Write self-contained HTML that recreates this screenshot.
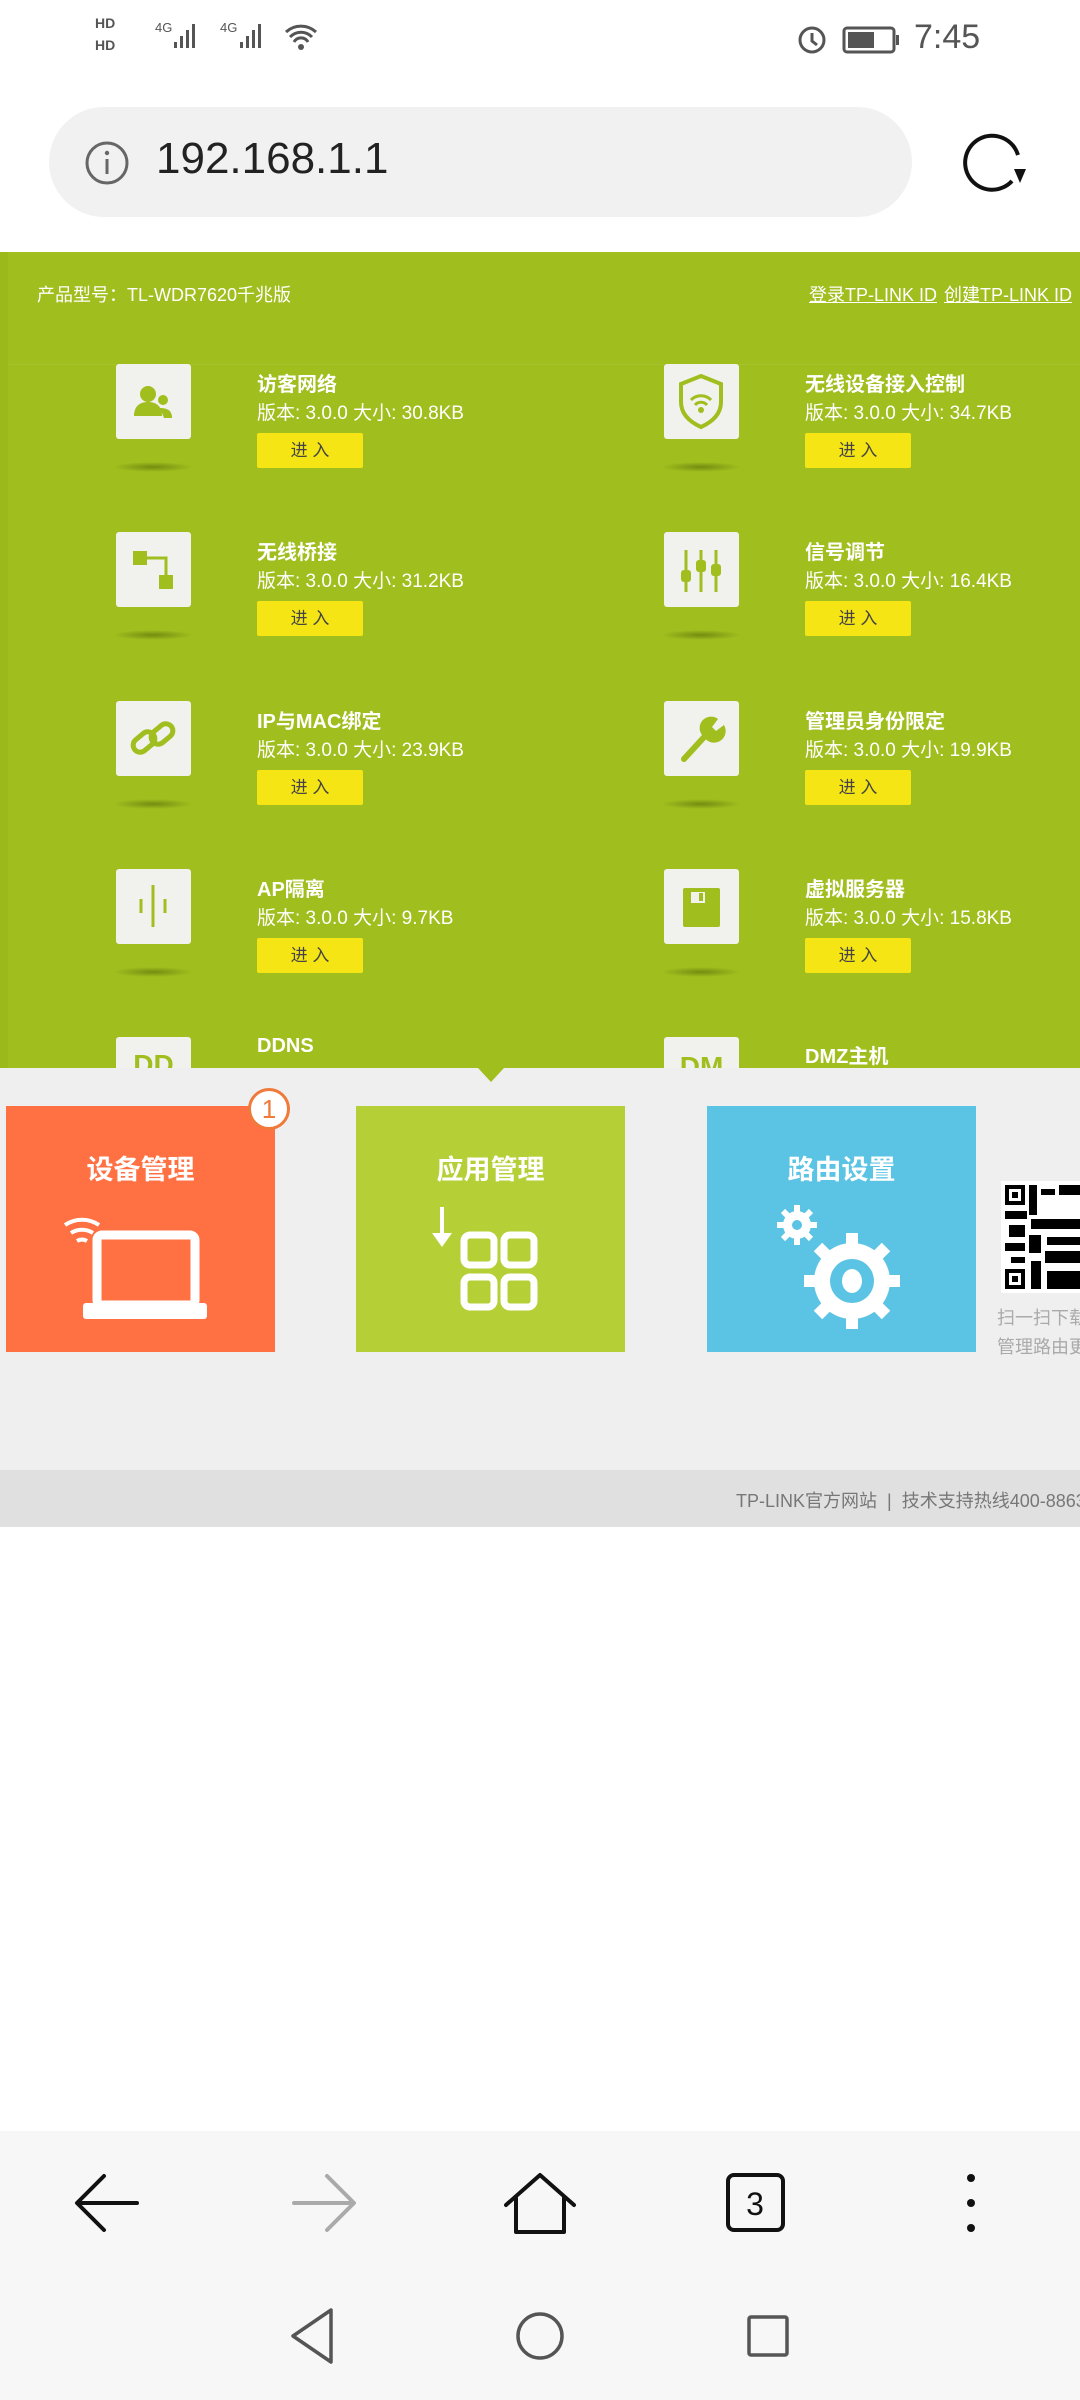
<!DOCTYPE html>
<html><head><meta charset="utf-8"><style>
*{margin:0;padding:0;box-sizing:border-box}
body{width:1080px;height:2400px;position:relative;background:#fff;font-family:"Liberation Sans","Noto Sans CJK SC",sans-serif;overflow:hidden}
.a{position:absolute}
.ico{position:absolute;width:75px;height:75px;background:#f1f1ed;border-radius:3px}
.sh{position:absolute;width:80px;height:10px;border-radius:50%;background:radial-gradient(ellipse,rgba(60,80,0,.45),rgba(60,80,0,0) 70%)}
.t{position:absolute;color:#fff;font-weight:bold;font-size:20px}
.v{position:absolute;color:#fff;font-size:19px;white-space:nowrap}
.b{position:absolute;width:106px;height:35px;background:#f6e514;color:#444;font-size:17px;text-align:center;line-height:35px;border-radius:2px}
.card{position:absolute;top:1106px;height:246px;width:269px;color:#fff;font-weight:bold;font-size:27px;text-align:center;padding-top:42px}
</style></head><body>
<div class="a" style="left:95px;top:12px;font-size:14px;font-weight:bold;color:#555;line-height:22px">HD<br>HD</div>
<div class="a" style="left:155px;top:20px;font-size:13px;color:#555">4G</div>
<div class="a" style="left:220px;top:20px;font-size:13px;color:#555">4G</div>
<svg class="a" style="left:168px;top:18px" width="160" height="40"><g fill="#555"><rect x="6" y="24" width="3" height="6"/><rect x="12" y="18" width="3" height="12"/><rect x="18" y="12" width="3" height="18"/><rect x="24" y="6" width="3" height="24"/><rect x="72" y="24" width="3" height="6"/><rect x="78" y="18" width="3" height="12"/><rect x="84" y="12" width="3" height="18"/><rect x="90" y="6" width="3" height="24"/></g><g fill="none" stroke="#555" stroke-width="3"><path d="M118 14a22 22 0 0 1 30 0M122 19a15 15 0 0 1 22 0M126 24a8 8 0 0 1 14 0"/></g><circle cx="133" cy="29" r="3" fill="#555"/></svg>
<svg class="a" style="left:792px;top:20px" width="120" height="40"><circle cx="20" cy="20" r="12" fill="none" stroke="#555" stroke-width="3"/><path d="M20 13v8l5 4" stroke="#555" stroke-width="3" fill="none"/><rect x="52" y="8" width="50" height="24" rx="3" fill="none" stroke="#555" stroke-width="3"/><rect x="56" y="12" width="26" height="16" fill="#555"/><rect x="104" y="15" width="3" height="10" fill="#555"/></svg>
<div class="a" style="left:914px;top:18px;font-size:34px;color:#555">7:45</div>
<div class="a" style="left:49px;top:107px;width:863px;height:110px;border-radius:55px;background:#f1f1f1"></div>
<svg class="a" style="left:84px;top:140px" width="46" height="46"><circle cx="23" cy="23" r="20" fill="none" stroke="#666" stroke-width="3"/><rect x="21.5" y="19" width="3" height="15" fill="#666"/><circle cx="23" cy="13" r="2.2" fill="#666"/></svg>
<div class="a" style="left:156px;top:134px;font-size:44px;color:#222">192.168.1.1</div>
<svg class="a" style="left:960px;top:125px" width="72" height="72"><path d="M58 30A27 27 0 1 0 52 56" fill="none" stroke="#111" stroke-width="4"/><path d="M54 44l6 14 6-14z" fill="#111"/></svg>
<div class="a" style="left:0;top:252px;width:1080px;height:816px;background:#a0be1e;overflow:hidden">
<div class="a" style="left:0;top:0;width:8px;height:816px;background:#9cb91b"></div>
<div class="a" style="left:37px;top:29px;color:#fff;font-size:18px">产品型号：TL-WDR7620千兆版</div>
<div class="a" style="left:809px;top:29px;color:#fff;font-size:18px;text-decoration:underline">登录TP-LINK ID</div>
<div class="a" style="left:944px;top:29px;color:#fff;font-size:18px;text-decoration:underline">创建TP-LINK ID</div>
<div class="a" style="left:8px;top:112px;width:1072px;height:1px;background:#a6c22c"></div>
</div>
<div class="a" style="left:0;top:252px;width:1080px;height:816px;overflow:hidden">
<div class="ico" style="left:116px;top:112px"><svg width="75" height="75"><g fill="#a0be1e"><circle cx="32" cy="30" r="8"/><path d="M18 52c0-10 6-14 14-14s14 4 14 14z"/><circle cx="47" cy="36" r="5"/><path d="M44 44c8 0 12 3 12 10h-8z"/></g></svg></div><div class="sh" style="left:113px;top:210px"></div>
<div class="t" style="left:257px;top:116px">访客网络</div><div class="v" style="left:257px;top:146px">版本: 3.0.0 大小: 30.8KB</div><div class="b" style="left:257px;top:181px">进 入</div>
<div class="ico" style="left:664px;top:112px"><svg width="75" height="75"><path d="M37 12l20 8v18c0 12-9 20-20 25-11-5-20-13-20-25V20z" fill="none" stroke="#a0be1e" stroke-width="4"/><path d="M27 36a14 14 0 0 1 20 0M31 41a8 8 0 0 1 12 0" fill="none" stroke="#a0be1e" stroke-width="3"/><circle cx="37" cy="46" r="3" fill="#a0be1e"/></svg></div><div class="sh" style="left:661px;top:210px"></div>
<div class="t" style="left:805px;top:116px">无线设备接入控制</div><div class="v" style="left:805px;top:146px">版本: 3.0.0 大小: 34.7KB</div><div class="b" style="left:805px;top:181px">进 入</div>

<div class="ico" style="left:116px;top:280px"><svg width="75" height="75"><rect x="17" y="19" width="14" height="14" fill="#a0be1e"/><rect x="43" y="43" width="14" height="14" fill="#a0be1e"/><path d="M31 26h19v17" fill="none" stroke="#a0be1e" stroke-width="3"/></svg></div><div class="sh" style="left:113px;top:378px"></div>
<div class="t" style="left:257px;top:284px">无线桥接</div><div class="v" style="left:257px;top:314px">版本: 3.0.0 大小: 31.2KB</div><div class="b" style="left:257px;top:349px">进 入</div>
<div class="ico" style="left:664px;top:280px"><svg width="75" height="75"><g stroke="#a0be1e" stroke-width="3"><path d="M22 18v42M37 18v42M52 18v42"/></g><g fill="#a0be1e"><rect x="17" y="38" width="10" height="12" rx="3"/><rect x="32" y="28" width="10" height="12" rx="3"/><rect x="47" y="32" width="10" height="12" rx="3"/></g></svg></div><div class="sh" style="left:661px;top:378px"></div>
<div class="t" style="left:805px;top:284px">信号调节</div><div class="v" style="left:805px;top:314px">版本: 3.0.0 大小: 16.4KB</div><div class="b" style="left:805px;top:349px">进 入</div>

<div class="ico" style="left:116px;top:449px"><svg width="75" height="75"><g fill="none" stroke="#a0be1e" stroke-width="5"><rect x="16" y="34" width="24" height="14" rx="7" transform="rotate(-40 28 41)"/><rect x="34" y="26" width="24" height="14" rx="7" transform="rotate(-40 46 33)"/></g></svg></div><div class="sh" style="left:113px;top:547px"></div>
<div class="t" style="left:257px;top:453px">IP与MAC绑定</div><div class="v" style="left:257px;top:483px">版本: 3.0.0 大小: 23.9KB</div><div class="b" style="left:257px;top:518px">进 入</div>
<div class="ico" style="left:664px;top:449px"><svg width="75" height="75"><path d="M20 58l22-24" stroke="#a0be1e" stroke-width="6" stroke-linecap="round"/><path d="M40 36a10 10 0 0 1 14-18l-6 8 4 4 8-6a10 10 0 0 1-20 12z" fill="#a0be1e"/></svg></div><div class="sh" style="left:661px;top:547px"></div>
<div class="t" style="left:805px;top:453px">管理员身份限定</div><div class="v" style="left:805px;top:483px">版本: 3.0.0 大小: 19.9KB</div><div class="b" style="left:805px;top:518px">进 入</div>

<div class="ico" style="left:116px;top:617px"><svg width="75" height="75"><g stroke="#a0be1e" stroke-width="3"><path d="M37 16v42M25 30v14M49 30v14"/></g></svg></div><div class="sh" style="left:113px;top:715px"></div>
<div class="t" style="left:257px;top:621px">AP隔离</div><div class="v" style="left:257px;top:651px">版本: 3.0.0 大小: 9.7KB</div><div class="b" style="left:257px;top:686px">进 入</div>
<div class="ico" style="left:664px;top:617px"><svg width="75" height="75"><rect x="19" y="19" width="37" height="39" rx="2" fill="#a0be1e"/><rect x="27" y="23" width="14" height="11" fill="#f1f1ed"/><rect x="35" y="24" width="4" height="8" fill="#a0be1e"/></svg></div><div class="sh" style="left:661px;top:715px"></div>
<div class="t" style="left:805px;top:621px">虚拟服务器</div><div class="v" style="left:805px;top:651px">版本: 3.0.0 大小: 15.8KB</div><div class="b" style="left:805px;top:686px">进 入</div>

<div class="ico" style="left:116px;top:785px;color:#a0be1e;font-size:28px;font-weight:bold;text-align:center;line-height:56px">DD</div>
<div class="t" style="left:257px;top:783px">DDNS</div>
<div class="ico" style="left:664px;top:785px;color:#a0be1e;font-size:28px;font-weight:bold;text-align:center;line-height:60px">DM</div>
<div class="t" style="left:805px;top:788px">DMZ主机</div>
</div>
<div class="a" style="left:0;top:1068px;width:1080px;height:402px;background:#efefef"></div>
<div class="a" style="left:478px;top:1068px;width:0;height:0;border-left:13px solid transparent;border-right:13px solid transparent;border-top:14px solid #a0be1e"></div>
<div class="card" style="left:6px;background:#ff7043">设备管理
<svg style="display:block;margin:18px auto 0" width="160" height="120"><g fill="none" stroke="#fff" stroke-width="4"><path d="M4 20a30 30 0 0 1 34 0M10 28a20 20 0 0 1 22 0M16 36a10 10 0 0 1 10 0"/></g><rect x="36" y="30" width="98" height="70" rx="5" fill="none" stroke="#fff" stroke-width="9"/><rect x="22" y="98" width="124" height="16" rx="3" fill="#fff"/></svg></div>
<div class="a" style="left:248px;top:1088px;width:42px;height:42px;border-radius:50%;background:#fff;border:3px solid #f07a3a;color:#f07a3a;font-size:26px;text-align:center;line-height:36px">1</div>
<div class="card" style="left:356px;background:#b5cf36">应用管理
<svg style="display:block;margin:20px auto 0" width="130" height="120"><path d="M16 0v30" stroke="#fff" stroke-width="4"/><path d="M6 26l10 14 10-14z" fill="#fff"/><g fill="none" stroke="#fff" stroke-width="7"><rect x="38" y="28" width="30" height="30" rx="6"/><rect x="78" y="28" width="30" height="30" rx="6"/><rect x="38" y="70" width="30" height="30" rx="6"/><rect x="78" y="70" width="30" height="30" rx="6"/></g></svg></div>
<div class="card" style="left:707px;background:#5bc3e3">路由设置
<svg style="display:block;margin:16px auto 0" width="130" height="130"><g fill="#fff"><circle cx="20" cy="22" r="14"/><circle cx="75" cy="78" r="38"/></g><g stroke="#fff" stroke-width="12"><path d="M75 30v96M27 78h96M41 44l68 68M109 44l-68 68"/></g><g stroke="#fff" stroke-width="6"><path d="M20 2v40M0 22h40M6 8l28 28M34 8L6 36"/></g><circle cx="20" cy="22" r="5" fill="#5bc3e3"/><circle cx="75" cy="78" r="22" fill="#5bc3e3"/><ellipse cx="75" cy="78" rx="10" ry="12" fill="#fff"/></svg></div>
<svg class="a" style="left:1001px;top:1181px" width="79" height="112"><rect width="79" height="112" fill="#fff"/><g fill="#000"><rect x="4" y="4" width="20" height="20"/><rect x="4" y="88" width="20" height="20"/><rect x="28" y="4" width="8" height="30"/><rect x="40" y="8" width="14" height="6"/><rect x="58" y="4" width="21" height="10"/><rect x="4" y="30" width="22" height="8"/><rect x="30" y="38" width="49" height="10"/><rect x="8" y="44" width="16" height="12"/><rect x="28" y="54" width="12" height="18"/><rect x="46" y="56" width="33" height="8"/><rect x="4" y="62" width="20" height="8"/><rect x="44" y="70" width="35" height="12"/><rect x="30" y="80" width="10" height="28"/><rect x="46" y="90" width="33" height="18"/><rect x="10" y="76" width="14" height="6"/></g><g fill="#fff"><rect x="8" y="8" width="12" height="12"/><rect x="8" y="92" width="12" height="12"/></g><g fill="#000"><rect x="11" y="11" width="6" height="6"/><rect x="11" y="95" width="6" height="6"/></g></svg>
<div class="a" style="left:997px;top:1304px;color:#aaa;font-size:18px;line-height:29px;white-space:nowrap">扫一扫下载<br>管理路由更</div>
<div class="a" style="left:0;top:1470px;width:1080px;height:57px;background:#e0e0e0"></div>
<div class="a" style="left:736px;top:1487px;color:#777;font-size:18px;white-space:nowrap">TP-LINK官方网站 &nbsp;|&nbsp; 技术支持热线400-8863-400</div>
<div class="a" style="left:0;top:2131px;width:1080px;height:269px;background:#f7f7f7"></div>
<svg class="a" style="left:0;top:2160px" width="1080" height="240">
<g fill="none" stroke-width="4" stroke-linecap="round" stroke-linejoin="round">
<path d="M137 43H80M104 16L77 43l27 27" stroke="#111"/>
<path d="M294 43h57M327 16l27 27-27 27" stroke="#aaa"/>
<path d="M506 45l34-30 34 30M516 38v34h48V38" stroke="#111"/>
<rect x="728" y="15" width="55" height="55" rx="6" stroke="#111"/>
<path d="M331 150l-38 26 38 26z" stroke="#555" stroke-width="3.5"/>
<circle cx="540" cy="176" r="22" stroke="#555" stroke-width="3.5"/>
<rect x="749" y="157" width="38" height="38" rx="2" stroke="#555" stroke-width="3.5"/>
</g>
<g fill="#111"><circle cx="971" cy="18" r="4"/><circle cx="971" cy="43" r="4"/><circle cx="971" cy="68" r="4"/></g>
<text x="755" y="55" font-family="Liberation Sans" font-size="32" text-anchor="middle" fill="#111">3</text>
</svg>
</body></html>
